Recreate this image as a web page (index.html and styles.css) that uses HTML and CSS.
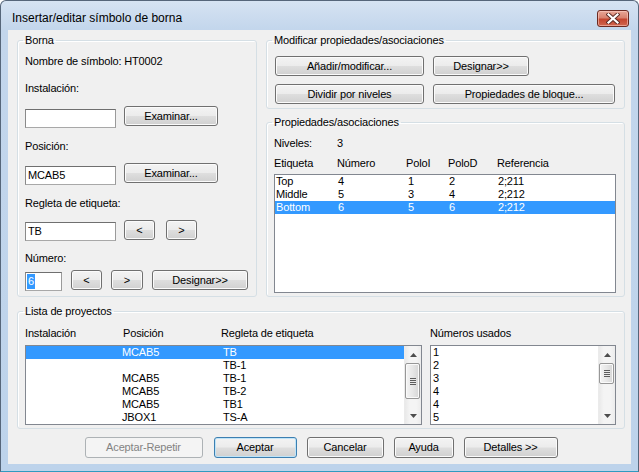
FILE: index.html
```html
<!DOCTYPE html>
<html>
<head>
<meta charset="utf-8">
<title>Insertar/editar símbolo de borna</title>
<link rel="stylesheet" href="styles.css">
</head>
<body>
<div class="window">
  <div class="titlebar">
    <span class="title">Insertar/editar símbolo de borna</span>
    <div class="close">
      <svg width="14" height="11" viewBox="0 0 14 11">
        <path d="M2.5 1.5 L11.5 9.5 M11.5 1.5 L2.5 9.5" stroke="#5a2a24" stroke-width="4" stroke-linecap="square"/>
        <path d="M2.5 1.5 L11.5 9.5 M11.5 1.5 L2.5 9.5" stroke="#ffffff" stroke-width="2.2" stroke-linecap="square"/>
      </svg>
    </div>
  </div>
  <div class="client">
    <div class="top">
      <fieldset class="group borna">
        <legend>Borna</legend>
        <div class="info">Nombre de símbolo: HT0002</div>
        <div class="lbl lbl-a">Instalación:</div>
        <div class="row row-a"><div class="textbox tb-wide"></div><button class="btn btn-exam">Examinar...</button></div>
        <div class="lbl lbl-b">Posición:</div>
        <div class="row row-b"><div class="textbox tb-wide">MCAB5</div><button class="btn btn-exam">Examinar...</button></div>
        <div class="lbl lbl-b">Regleta de etiqueta:</div>
        <div class="row row-b row-c"><div class="textbox tb-wide">TB</div><button class="btn btn-arrow">&lt;</button><button class="btn btn-arrow btn-next">&gt;</button></div>
        <div class="lbl lbl-c">Número:</div>
        <div class="row row-d"><div class="textbox tb-num"><span class="seltext">6</span></div><button class="btn btn-arrow">&lt;</button><button class="btn btn-arrow btn-arrow2">&gt;</button><button class="btn btn-des">Designar&gt;&gt;</button></div>
      </fieldset>
      <div class="rightcol">
        <fieldset class="group modificar">
          <legend>Modificar propiedades/asociaciones</legend>
          <div class="btnrow btnrow-1"><button class="btn btn-w149">Añadir/modificar...</button><button class="btn btn-w96">Designar&gt;&gt;</button></div>
          <div class="btnrow btnrow-2"><button class="btn btn-w149">Dividir por niveles</button><button class="btn btn-w182">Propiedades de bloque...</button></div>
        </fieldset>
        <fieldset class="group props">
          <legend>Propiedades/asociaciones</legend>
          <div class="pgrid niveles"><span>Niveles:</span><span>3</span></div>
          <div class="pgrid phead"><span>Etiqueta</span><span>Número</span><span>PoloI</span><span>PoloD</span><span>Referencia</span></div>
          <div class="listbox plist">
            <div class="rows">
              <div class="lrow prow"><span>Top</span><span>4</span><span>1</span><span>2</span><span>2;211</span></div>
              <div class="lrow prow"><span>Middle</span><span>5</span><span>3</span><span>4</span><span>2;212</span></div>
              <div class="lrow prow sel"><span>Bottom</span><span>6</span><span>5</span><span>6</span><span>2;212</span></div>
            </div>
          </div>
        </fieldset>
      </div>
    </div>
    <fieldset class="group lista">
      <legend>Lista de proyectos</legend>
      <div class="lista-body">
        <div class="lcol lcol-left">
          <div class="lhead"><span>Instalación</span><span>Posición</span><span>Regleta de etiqueta</span></div>
          <div class="listbox proj">
            <div class="rows">
              <div class="lrow jrow sel"><span></span><span>MCAB5</span><span>TB</span></div>
              <div class="lrow jrow"><span></span><span></span><span>TB-1</span></div>
              <div class="lrow jrow"><span></span><span>MCAB5</span><span>TB-1</span></div>
              <div class="lrow jrow"><span></span><span>MCAB5</span><span>TB-2</span></div>
              <div class="lrow jrow"><span></span><span>MCAB5</span><span>TB1</span></div>
              <div class="lrow jrow"><span></span><span>JBOX1</span><span>TS-A</span></div>
            </div>
            <div class="vscroll">
              <div class="sb-btn"><svg width="7" height="4" viewBox="0 0 7 4"><polygon points="3.5,0 7,4 0,4" fill="#4d4d4d"/></svg></div>
              <div class="sb-thumb thumb-long"><div class="grip"></div></div>
              <div class="sb-track"></div>
              <div class="sb-btn"><svg width="7" height="4" viewBox="0 0 7 4"><polygon points="0,0 7,0 3.5,4" fill="#4d4d4d"/></svg></div>
            </div>
          </div>
        </div>
        <div class="lcol lcol-right">
          <div class="lhead"><span>Números usados</span></div>
          <div class="listbox nums">
            <div class="rows">
              <div class="lrow nrow">1</div>
              <div class="lrow nrow">2</div>
              <div class="lrow nrow">3</div>
              <div class="lrow nrow">4</div>
              <div class="lrow nrow">4</div>
              <div class="lrow nrow">5</div>
            </div>
            <div class="vscroll">
              <div class="sb-btn"><svg width="7" height="4" viewBox="0 0 7 4"><polygon points="3.5,0 7,4 0,4" fill="#4d4d4d"/></svg></div>
              <div class="sb-thumb thumb-short"><div class="grip"></div></div>
              <div class="sb-track"></div>
              <div class="sb-btn"><svg width="7" height="4" viewBox="0 0 7 4"><polygon points="0,0 7,0 3.5,4" fill="#4d4d4d"/></svg></div>
            </div>
          </div>
        </div>
      </div>
    </fieldset>
    <div class="actions">
      <button class="btn btn-disabled b-rep">Aceptar-Repetir</button>
      <button class="btn btn-default b-ok">Aceptar</button>
      <button class="btn b-cancel">Cancelar</button>
      <button class="btn b-help">Ayuda</button>
      <button class="btn b-det">Detalles &gt;&gt;</button>
    </div>
  </div>
</div>
</body>
</html>
```
FILE: styles.css
```css
* { box-sizing: border-box; }
html, body { margin: 0; padding: 0; }
body {
  width: 639px;
  height: 472px;
  overflow: hidden;
  background: #ffffff;
  font-family: "Liberation Sans", Arial, sans-serif;
  font-size: 11px;
  color: #000;
}
.window {
  width: 639px;
  height: 472px;
  border: 1px solid #56667a;
  border-bottom-color: #2f9ac0;
  border-radius: 6px 6px 0 0;
  background: linear-gradient(to bottom, #d6e3f2 0px, #c3d6ec 28px, #bdd3eb 100%);
  display: flex;
  flex-direction: column;
}
.titlebar {
  height: 29px;
  display: flex;
  align-items: flex-start;
  justify-content: space-between;
  padding: 0 9px 0 11px;
}
.title {
  margin-top: 10px;
  font-size: 12px;
  line-height: 15px;
  color: #000;
}
.close {
  margin-top: 9px;
  width: 32px;
  height: 17px;
  border: 1px solid #6b2a22;
  border-radius: 3px;
  background: linear-gradient(to bottom, #e8a797 0%, #d9826f 45%, #c4452f 55%, #d0664f 100%);
  box-shadow: inset 0 0 0 1px rgba(255, 210, 200, 0.55);
  display: flex;
  align-items: center;
  justify-content: center;
}
.client {
  margin: 0 7px;
  height: 434px;
  background: #f0f0f0;
  padding: 4px 6px 0 9px;
  display: flex;
  flex-direction: column;
  letter-spacing: -0.15px;
}
.top {
  display: flex;
  gap: 9px;
  height: 263px;
}

/* group boxes */
.group {
  margin: 0;
  padding: 0 0 0 7px;
  border: 1px solid #d5dfe5;
  border-radius: 3px;
  min-width: 0;
  box-shadow: inset 1px 1px 0 #ffffff;
}
.group legend {
  padding: 0 2px;
  margin-left: -2px;
  font-size: 11px;
  line-height: 13px;
}
.borna {
  width: 240px;
  height: 263px;
  display: flex;
  flex-direction: column;
}
.rightcol {
  width: 359px;
  display: flex;
  flex-direction: column;
  gap: 7px;
}
.modificar { height: 75px; }
.props { height: 181px; }

/* Borna contents */
.info { margin-top: 8px; line-height: 13px; }
.lbl { line-height: 13px; }
.lbl-a { margin-top: 14px; }
.lbl-b { margin-top: 12px; }
.lbl-c { margin-top: 10px; }
.row { display: flex; align-items: flex-start; gap: 8px; height: 22px; }
.row-a { margin-top: 11px; }
.row-b { margin-top: 10px; }
.row-d { margin-top: 5px; gap: 9px; }
.row-a .textbox, .row-b .textbox { margin-top: 3px; }
.row-c .textbox, .row-d .textbox { margin-top: 2px; }
.btn-next { margin-left: 3px; }

.textbox {
  height: 19px;
  border: 1px solid #7a7a7a;
  border-color: #6f6f6f #9a9a9a #a8a8a8 #8a8a8a;
  background: #fff;
  padding-left: 2px;
  line-height: 17px;
  white-space: nowrap;
}
.tb-wide { width: 91px; }
.tb-num { width: 37px; padding-left: 1px; }
.seltext {
  display: inline-block;
  background: #3399ff;
  color: #fff;
  line-height: 15px;
  padding: 0 1px;
  margin-top: 1px;
}

/* buttons */
.btn {
  height: 20px;
  padding: 0;
  border: 1px solid #707070;
  border-radius: 3px;
  background: linear-gradient(to bottom, #f3f3f3 0%, #ececec 48%, #dedede 52%, #d0d0d0 100%);
  box-shadow: inset 0 0 0 1px #fbfbfb;
  font-family: "Liberation Sans", Arial, sans-serif;
  font-size: 11px;
  letter-spacing: -0.15px;
  color: #000;
  line-height: 18px;
  text-align: center;
  white-space: nowrap;
}
.btn-exam { width: 94px; }
.btn-arrow { width: 31px; }
.btn-arrow2 { width: 32px; }
.btn-des { width: 96px; }
.btn-w149 { width: 149px; }
.btn-w96 { width: 96px; }
.btn-w182 { width: 182px; }
.btn-default {
  border-color: #3c7fb1;
  box-shadow: inset 0 0 0 1px #bfe4f8;
}
.btn-disabled {
  border-color: #adb2b5;
  background: #f4f4f4;
  box-shadow: none;
  color: #838383;
}

/* Modificar */
.btnrow { display: flex; gap: 9px; margin-left: 1px; }
.btnrow-1 { margin-top: 9px; }
.btnrow-2 { margin-top: 8px; }

/* Propiedades */
.pgrid {
  display: grid;
  grid-template-columns: 63px 69px 42px 49px 1fr;
  line-height: 13px;
}
.niveles { margin-top: 8px; }
.phead { margin-top: 7px; }
.listbox {
  border: 1px solid #828790;
  background: #fff;
  display: flex;
  overflow: hidden;
}
.rows { flex: 1; min-width: 0; }
.lrow {
  height: 13px;
  line-height: 13px;
  white-space: nowrap;
}
.lrow.sel { background: #3399ff; color: #fff; }
.plist {
  margin-top: 4px;
  width: 342px;
  height: 119px;
}
.prow {
  display: grid;
  grid-template-columns: 62px 70px 41px 49px 1fr;
  padding-left: 1px;
}

/* Lista de proyectos */
.lista {
  margin-top: 8px;
  height: 124px;
}
.lista-body {
  display: flex;
  gap: 8px;
  margin-top: 9px;
}
.lcol { display: flex; flex-direction: column; }
.lcol-left { width: 397px; }
.lcol-right { width: 186px; }
.lhead {
  display: grid;
  grid-template-columns: 98px 98px 1fr;
  line-height: 13px;
}
.proj, .nums { margin-top: 5px; height: 80px; }
.jrow {
  display: grid;
  grid-template-columns: 96px 101px 1fr;
}
.nrow { padding-left: 2px; }

.vscroll {
  width: 17px;
  display: flex;
  flex-direction: column;
  background: linear-gradient(to right, #e9e9e9 0%, #f4f4f4 30%, #f4f4f4 70%, #ececec 100%);
  border-left: 1px solid #ebebeb;
}
.sb-btn {
  height: 17px;
  display: flex;
  align-items: center;
  justify-content: center;
  flex: none;
}
.sb-track { flex: 1; }
.sb-thumb {
  margin: 0 1px 0 0;
  border: 1px solid #979797;
  border-radius: 2px;
  background: linear-gradient(to right, #f4f4f4 0%, #e7e7e7 50%, #d6d6d6 100%);
  box-shadow: inset 0 0 0 1px #fafafa;
  display: flex;
  align-items: center;
  justify-content: center;
  flex: none;
}
.thumb-long { height: 36px; }
.thumb-short { height: 21px; }
.grip {
  width: 6px;
  height: 7px;
  background: repeating-linear-gradient(to bottom, #5c5c5c 0px, #5c5c5c 1px, #e8e8e8 1px, #e8e8e8 2px);
}

/* action buttons */
.actions {
  margin-top: 8px;
  display: flex;
  justify-content: center;
  gap: 10px;
}
.actions .btn { height: 21px; line-height: 19px; }
.b-rep { width: 118px; margin-right: 1px; }
.b-ok { width: 83px; }
.b-cancel { width: 77px; }
.b-help { width: 60px; }
.b-det { width: 94px; }
```
